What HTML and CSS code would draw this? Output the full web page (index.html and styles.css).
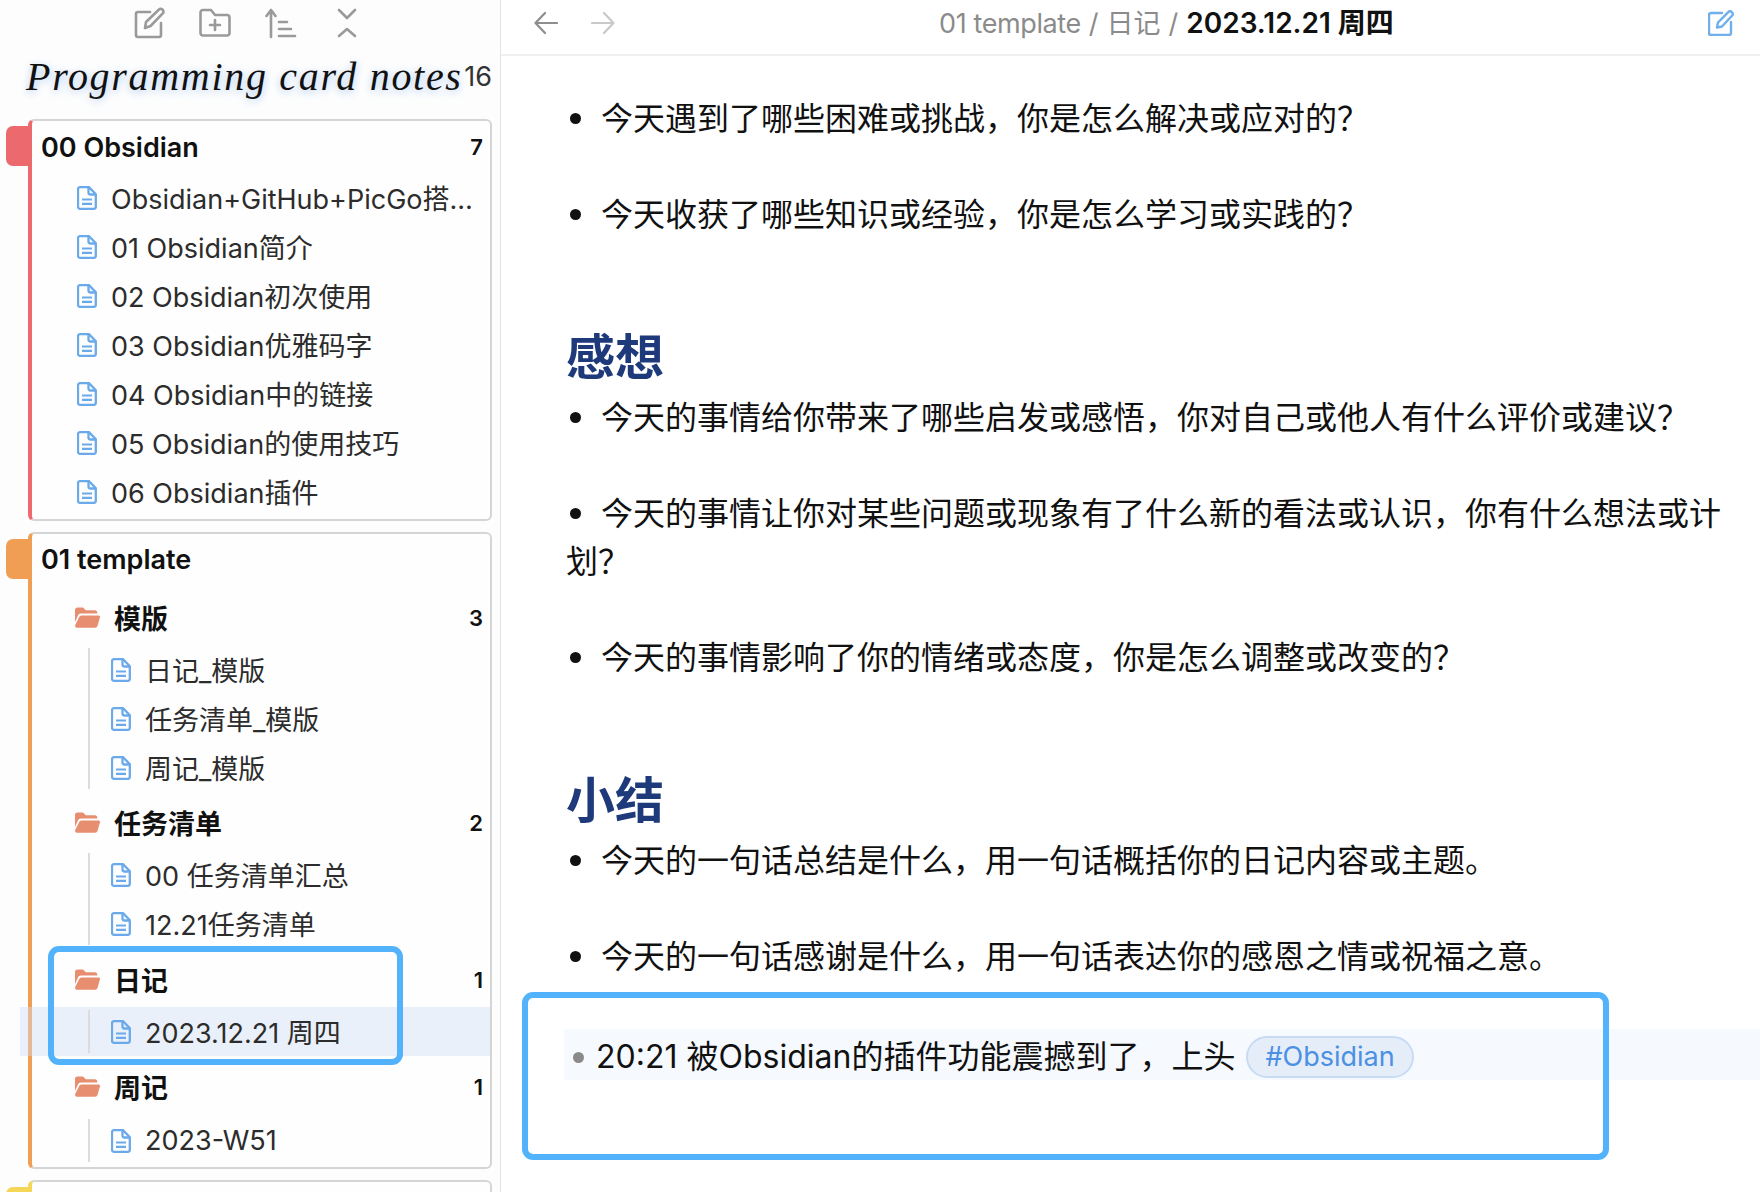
FILE: index.html
```html
<!DOCTYPE html>
<html lang="zh-CN">
<head>
  <meta charset="UTF-8">
  <title>2023.12.21 周四</title>
  <link rel="stylesheet" href="styles.css">
</head>
<body>

<svg class="sprites" width="0" height="0">
  <symbol id="doc" viewBox="0 0 20 24">
    <path d="M3 1.200h9l6.800 7v12.600a2 2 0 0 1-2 2H3a2 2 0 0 1-2-2V3.200a2 2 0 0 1 2-2z" fill="none" stroke="currentColor" stroke-width="2.300"/>
    <path d="M11.500 1.500v5a2 2 0 0 0 2 2h5" fill="none" stroke="currentColor" stroke-width="2.300"/>
    <path d="M5 13.500h10M5 17.800h10" stroke="currentColor" stroke-width="2.200"/>
  </symbol>
  <symbol id="folder" viewBox="0 0 25 21">
    <path d="M0 3a2.500 2.500 0 0 1 2.500-2.500h5.500l2.800 2.800h9a2.500 2.500 0 0 1 2.500 2.500v.7H6a3.500 3.500 0 0 0-3.300 2.400L0 15z" fill="currentColor"/>
    <path d="M6.500 8.500H23.500a1.500 1.500 0 0 1 1.400 2L22.500 19a2.500 2.500 0 0 1-2.400 1.800H2.200A2.200 2.200 0 0 1 .2 18l4-8a2.500 2.500 0 0 1 2.300-1.500z" fill="currentColor"/>
  </symbol>
</svg>

<div class="app">
  <aside class="sidebar">
    <div class="toolbar">
      <svg class="tool" viewBox="0 0 32 32"><path d="M17 5H5a2 2 0 0 0-2 2v21a2 2 0 0 0 2 2h21a2 2 0 0 0 2-2V16"/><path d="M12 21l1-6L26 2.500a2.300 2.300 0 0 1 3.300 0l.5.5a2.300 2.300 0 0 1 0 3.300L17.500 19z"/></svg>
      <svg class="tool" viewBox="0 0 32 32"><path d="M4 3h8l4 5h12a2.500 2.500 0 0 1 2.500 2.500V26a2.500 2.500 0 0 1-2.500 2.500H4A2.500 2.500 0 0 1 1.500 26V5.500A2.500 2.500 0 0 1 4 3z"/><path d="M16 13v10M11 18h10"/></svg>
      <svg class="tool" viewBox="0 0 32 32"><path d="M6 30V3M1.500 9L6 3l4.500 6"/><path d="M14 15h8M14 22h12M14 29h16"/></svg>
      <svg class="tool" viewBox="0 0 32 32"><path d="M8 3l8 8 8-8"/><path d="M8 29l8-7 8 7"/></svg>
    </div>

    <div class="vault">
      <span class="vault-name">Programming card notes</span>
      <span class="vault-count">16</span>
    </div>

    <section class="card card-red">
      <div class="card-head"><span>00 Obsidian</span><b>7</b></div>
      <div class="file"><svg class="doc"><use href="#doc"/></svg><span>Obsidian+GitHub+PicGo搭…</span></div>
      <div class="file"><svg class="doc"><use href="#doc"/></svg><span>01 Obsidian简介</span></div>
      <div class="file"><svg class="doc"><use href="#doc"/></svg><span>02 Obsidian初次使用</span></div>
      <div class="file"><svg class="doc"><use href="#doc"/></svg><span>03 Obsidian优雅码字</span></div>
      <div class="file"><svg class="doc"><use href="#doc"/></svg><span>04 Obsidian中的链接</span></div>
      <div class="file"><svg class="doc"><use href="#doc"/></svg><span>05 Obsidian的使用技巧</span></div>
      <div class="file"><svg class="doc"><use href="#doc"/></svg><span>06 Obsidian插件</span></div>
    </section>

    <section class="card card-orange">
      <div class="card-head"><span>01 template</span></div>

      <div class="folder"><svg class="folder-icon"><use href="#folder"/></svg><span>模版</span><b>3</b></div>
      <div class="tree">
        <div class="file"><svg class="doc"><use href="#doc"/></svg><span>日记_模版</span></div>
        <div class="file"><svg class="doc"><use href="#doc"/></svg><span>任务清单_模版</span></div>
        <div class="file"><svg class="doc"><use href="#doc"/></svg><span>周记_模版</span></div>
      </div>

      <div class="folder"><svg class="folder-icon"><use href="#folder"/></svg><span>任务清单</span><b>2</b></div>
      <div class="tree">
        <div class="file"><svg class="doc"><use href="#doc"/></svg><span>00 任务清单汇总</span></div>
        <div class="file"><svg class="doc"><use href="#doc"/></svg><span>12.21任务清单</span></div>
      </div>

      <div class="folder folder-diary"><svg class="folder-icon"><use href="#folder"/></svg><span>日记</span><b>1</b></div>
      <div class="tree">
        <div class="file active"><svg class="doc"><use href="#doc"/></svg><span>2023.12.21 周四</span></div>
      </div>

      <div class="folder folder-week"><svg class="folder-icon"><use href="#folder"/></svg><span>周记</span><b>1</b></div>
      <div class="tree">
        <div class="file"><svg class="doc"><use href="#doc"/></svg><span>2023-W51</span></div>
      </div>
    </section>

    <section class="card card-yellow"></section>
  </aside>

  <main class="main">
    <header class="topbar">
      <div class="nav">
        <svg class="arrow" viewBox="0 0 24 24"><path d="M23 12H2M11 2L1.500 12 11 22"/></svg>
        <svg class="arrow arrow-off" viewBox="0 0 24 24"><path d="M1 12h21M13 2l9.500 10L13 22"/></svg>
      </div>
      <div class="crumbs">
        <span class="crumb-first">01 template</span><i>/</i><span>日记</span><i>/</i><strong>2023.12.21 周四</strong>
      </div>
      <svg class="edit" viewBox="0 0 26 26"><path d="M14 3H3a2 2 0 0 0-2 2v18a2 2 0 0 0 2 2h18a2 2 0 0 0 2-2V12"/><path d="M9 17.500l1-5L20.500 1.800a2 2 0 0 1 2.900 0l.8.800a2 2 0 0 1 0 2.900L14 16.500z"/></svg>
    </header>

    <article class="note">
      <ul>
        <li>今天遇到了哪些困难或挑战，你是怎么解决或应对的？</li>
        <li>今天收获了哪些知识或经验，你是怎么学习或实践的？</li>
      </ul>
      <h2>感想</h2>
      <ul>
        <li>今天的事情给你带来了哪些启发或感悟，你对自己或他人有什么评价或建议？</li>
        <li>今天的事情让你对某些问题或现象有了什么新的看法或认识，你有什么想法或计划？</li>
        <li>今天的事情影响了你的情绪或态度，你是怎么调整或改变的？</li>
      </ul>
      <h2>小结</h2>
      <ul>
        <li>今天的一句话总结是什么，用一句话概括你的日记内容或主题。</li>
        <li>今天的一句话感谢是什么，用一句话表达你的感恩之情或祝福之意。</li>
      </ul>
      <div class="memo">
        <span class="memo-dot"></span>
        <span>20:21 被Obsidian的插件功能震撼到了，上头</span>
        <span class="tag">#Obsidian</span>
      </div>
    </article>
  </main>

  <div class="mark mark-side"></div>
  <div class="mark mark-note"></div>
</div>

</body>
</html>
```

FILE: styles.css
```css
html, body {
  margin: 0;
  height: 100%;
  overflow: hidden;
}
body {
  font-family: Inter, "Noto Sans CJK SC", sans-serif;
  color: #111;
  background: #fff;
}
.sprites {
  position: absolute;
}
.app {
  position: relative;
  display: flex;
  height: 1192px;
  overflow: hidden;
}

/* sidebar */
.sidebar {
  flex: 0 0 500px;
  border-right: 1px solid #e4e4e4;
  background: #fdfdfd;
}
.toolbar {
  display: flex;
  justify-content: center;
  gap: 34px;
  height: 46px;
  padding: 7px 4px 0 0;
  box-sizing: border-box;
}
.tool {
  width: 32px;
  height: 32px;
  fill: none;
  stroke: #9a9a9a;
  stroke-width: 2.600;
  stroke-linecap: round;
  stroke-linejoin: round;
}
.vault {
  display: flex;
  align-items: center;
  justify-content: space-between;
  height: 60px;
  padding: 0 8px 0 26px;
}
.vault-name {
  font-family: "Liberation Serif", serif;
  font-style: italic;
  font-size: 40px;
  letter-spacing: 1.700px;
  color: #111;
  text-shadow: 0 2px 8px #a8c8f0;
  white-space: nowrap;
}
.vault-count {
  font-size: 27px;
  color: #333;
}
.card {
  position: relative;
  width: 458px;
  margin: 0 0 13px 28px;
  border: 2px solid #d5d5d5;
  border-left: 4px solid;
  border-radius: 6px;
  background: #fefefe;
}
.card::before {
  content: "";
  position: absolute;
  left: -26px;
  top: 5px;
  width: 22px;
  height: 40px;
  border-radius: 7px 0 0 7px;
}
.card-red { margin: 13px 0 11px 28px; height: 398px; border-left-color: #ec6a6e; }
.card-red::before { background: #ec6a6e; }
.card-orange { margin-bottom: 11px; padding-bottom: 2px; border-left-color: #f19e55; }
.card-orange::before { background: #f19e55; }
.card-orange .card-head { height: 50px; }
.card-yellow { height: 60px; border-left-color: #f5d657; }
.card-yellow::before { background: #f5d657; }

.card-head {
  display: flex;
  justify-content: space-between;
  align-items: center;
  height: 52px;
  padding: 0 7px 0 9px;
  font-size: 27px;
  font-weight: 600;
}
.card-head b, .folder b {
  font-size: 22px;
  font-weight: 600;
}
.file {
  display: flex;
  align-items: center;
  height: 49px;
  padding-left: 45px;
  font-size: 27px;
  color: #2c2c2c;
}
.file span {
  margin-left: 14px;
  white-space: nowrap;
}
.doc {
  flex: none;
  width: 20px;
  height: 24px;
  color: #6aa9ea;
}
.folder {
  display: flex;
  align-items: center;
  height: 55px;
  margin-top: 3px;
  padding: 0 7px 0 43px;
  font-size: 27px;
  font-weight: 600;
}
.card-head + .folder {
  margin-top: 6px;
}
.folder-diary {
  margin-top: 4px;
}
.folder-week {
  margin-bottom: 2px;
}
.folder span {
  flex: 1;
  margin-left: 14px;
}
.folder-icon {
  flex: none;
  width: 25px;
  height: 21px;
  color: #e88e70;
}
.tree {
  position: relative;
}
.tree::before {
  content: "";
  position: absolute;
  left: 56px;
  top: 3px;
  bottom: 3px;
  width: 2px;
  background: #dcdcdc;
}
.tree .file {
  padding-left: 79px;
}
.file.active {
  margin-left: -12px;
  padding-left: 91px;
  background: rgba(205, 222, 243, 0.42);
}

/* main pane */
.main {
  flex: 1;
  min-width: 0;
}
.topbar {
  position: relative;
  display: flex;
  align-items: center;
  justify-content: center;
  box-sizing: border-box;
  height: 56px;
  padding-bottom: 13px;
  border-bottom: 2px solid #f0f0f0;
}
.nav {
  position: absolute;
  left: 33px;
  top: 11px;
  display: flex;
  gap: 33px;
}
.arrow {
  width: 24px;
  height: 24px;
  fill: none;
  stroke: #8e8e8e;
  stroke-width: 2.200;
  stroke-linecap: round;
  stroke-linejoin: round;
}
.arrow-off {
  stroke: #c9c9c9;
}
.crumbs {
  margin-left: 72px;
  font-size: 27px;
  color: #8b8b8b;
  white-space: nowrap;
}
.crumb-first {
  letter-spacing: -0.400px;
}
.crumbs i {
  margin: 0 8px;
  font-style: normal;
}
.crumbs strong {
  color: #111;
  font-size: 28px;
  font-weight: 600;
}
.edit {
  position: absolute;
  right: 26px;
  top: 10px;
  width: 26px;
  height: 26px;
  fill: none;
  stroke: #6fb0ec;
  stroke-width: 2.400;
  stroke-linecap: round;
  stroke-linejoin: round;
}
.note {
  padding: 39px 0 0 65px;
  font-size: 32px;
  line-height: 48px;
}
.note ul {
  margin: 0;
  padding: 0 38px 0 0;
  list-style: none;
}
.note li {
  margin-bottom: 48px;
}
.note li::before {
  content: "";
  display: inline-block;
  width: 11px;
  height: 11px;
  margin: 0 20px 5px 4px;
  border-radius: 50%;
  background: #111;
  vertical-align: middle;
}
.note h2 {
  margin: 89px 0 6px;
  font-size: 49px;
  line-height: 60px;
  font-weight: 700;
  color: #1e3a7b;
}
.memo {
  display: flex;
  align-items: center;
  box-sizing: border-box;
  height: 51px;
  margin-left: -2px;
  padding-top: 4px;
  background: #f6f9fe;
  white-space: nowrap;
}
.memo-dot {
  width: 11px;
  height: 11px;
  margin: 2px 12px 0 9px;
  border-radius: 50%;
  background: #8a8a8a;
}
.tag {
  margin-left: 11px;
  padding: 0 17px;
  height: 38px;
  border: 2px solid #c8dbf4;
  border-radius: 21px;
  background: #e5edf9;
  color: #4b90e2;
  font-size: 27px;
  line-height: 38px;
}

/* blue annotation frames drawn over the screenshot */
.mark {
  position: absolute;
  box-sizing: border-box;
  border: 6px solid #52b2fb;
  border-radius: 11px;
}
.mark-side {
  left: 48px;
  top: 946px;
  width: 355px;
  height: 119px;
}
.mark-note {
  left: 522px;
  top: 992px;
  width: 1087px;
  height: 168px;
}
```
